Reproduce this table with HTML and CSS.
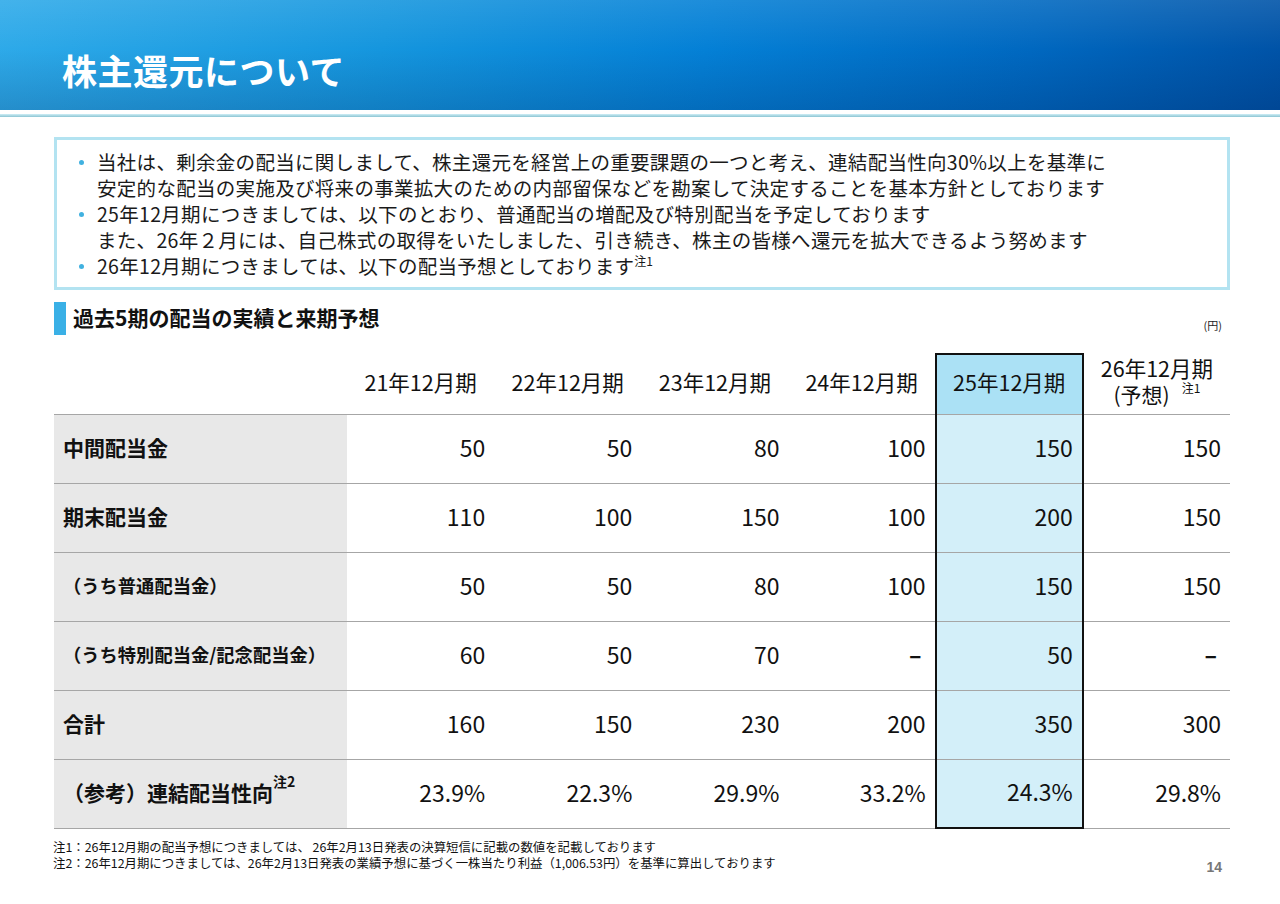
FILE: index.html
```html
<!DOCTYPE html>
<html lang="ja">
<head>
<meta charset="utf-8">
<title>株主還元について</title>
<link rel="stylesheet" href="styles.css">
</head>
<body>
<div class="slide">
  <header class="header">
    <h1 class="title">株主還元について</h1>
  </header>
  <div class="rule"></div>
  <main class="content">
    <section class="infobox">
      <ul class="bullets">
        <li>当社は、剰余金の配当に関しまして、株主還元を経営上の重要課題の一つと考え、連結配当性向30%以上を基準に<br>安定的な配当の実施及び将来の事業拡大のための内部留保などを勘案して決定することを基本方針としております</li>
        <li>25年12月期につきましては、以下のとおり、普通配当の増配及び特別配当を予定しております<br>また、26年２月には、自己株式の取得をいたしました、引き続き、株主の皆様へ還元を拡大できるよう努めます</li>
        <li>26年12月期につきましては、以下の配当予想としております<sup class="note">注1</sup></li>
      </ul>
    </section>
    <div class="section-head">
      <span class="bar"></span>
      <h2 class="section-title">過去5期の配当の実績と来期予想</h2>
      <span class="unit">(円)</span>
    </div>
    <table class="divtable">
      <colgroup>
        <col class="c-label"><col class="c-val"><col class="c-val"><col class="c-val"><col class="c-val"><col class="c-val"><col class="c-val">
      </colgroup>
      <thead>
        <tr>
          <th class="blank"></th>
          <th>21年12月期</th>
          <th>22年12月期</th>
          <th>23年12月期</th>
          <th>24年12月期</th>
          <th class="hl hl-head">25年12月期</th>
          <th class="two"><span class="l1">26年12月期</span><span class="l2"><span class="yosou">(予想)</span><sup class="hnote">注1</sup></span></th>
        </tr>
      </thead>
      <tbody>
        <tr>
          <td class="lab">中間配当金</td>
          <td>50</td><td>50</td><td>80</td><td>100</td><td class="hl">150</td><td>150</td>
        </tr>
        <tr>
          <td class="lab">期末配当金</td>
          <td>110</td><td>100</td><td>150</td><td>100</td><td class="hl">200</td><td>150</td>
        </tr>
        <tr>
          <td class="lab sub">（うち普通配当金）</td>
          <td>50</td><td>50</td><td>80</td><td>100</td><td class="hl">150</td><td>150</td>
        </tr>
        <tr>
          <td class="lab sub">（うち特別配当金/記念配当金）</td>
          <td>60</td><td>50</td><td>70</td><td class="dash">–</td><td class="hl">50</td><td class="dash">–</td>
        </tr>
        <tr>
          <td class="lab">合計</td>
          <td>160</td><td>150</td><td>230</td><td>200</td><td class="hl">350</td><td>300</td>
        </tr>
        <tr class="last">
          <td class="lab">（参考）連結配当性向<sup class="lnote">注2</sup></td>
          <td>23.9%</td><td>22.3%</td><td>29.9%</td><td>33.2%</td><td class="hl hl-last">24.3%</td><td>29.8%</td>
        </tr>
      </tbody>
    </table>
    <footer class="notes">
      <div class="note-lines">
        <p>注1：26年12月期の配当予想につきましては、 26年2月13日発表の決算短信に記載の数値を記載しております</p>
        <p>注2：26年12月期につきましては、26年2月13日発表の業績予想に基づく一株当たり利益（1,006.53円）を基準に算出しております</p>
      </div>
      <span class="page">14</span>
    </footer>
  </main>
</div>
</body>
</html>
```

FILE: styles.css
```css
* { box-sizing: border-box; }
html, body { margin: 0; padding: 0; }
body {
  width: 1280px;
  height: 904px;
  overflow: hidden;
  background: #ffffff;
  font-family: "Noto Sans CJK JP", "Noto Sans", sans-serif;
  color: #111111;
}
.slide { width: 1280px; height: 904px; }

.header {
  height: 110px;
  background:
    linear-gradient(to bottom, rgba(255,255,255,0.10) 0%, rgba(0,0,0,0) 45%, rgba(0,20,70,0.18) 100%),
    linear-gradient(100deg, #2eaae9 0%, #1596de 30%, #0480d6 55%, #0068c0 80%, #0052a6 100%);
  display: flex;
  align-items: flex-end;
  padding: 0 0 20px 62px;
}
.title {
  margin: 0;
  color: #ffffff;
  font-size: 35px;
  font-weight: 700;
  line-height: 40px;
  letter-spacing: 0.5px;
}
.rule {
  margin-top: 4px;
  height: 3px;
  background: linear-gradient(to bottom, #cfeef6, #8cc5d3);
}

.content { padding: 0 50px 0 54px; }

.infobox {
  margin-top: 20px;
  height: 153px;
  border: 3px solid #b3e3f1;
  padding: 9px 0 0 21px;
}
.bullets {
  list-style: none;
  margin: 0;
  padding: 0;
  font-size: 19.5px;
  letter-spacing: 0.3px;
  line-height: 26px;
  color: #1a1a1a;
}
.bullets li {
  position: relative;
  padding-left: 19px;
  white-space: nowrap;
}
.bullets li::before {
  content: "";
  position: absolute;
  left: 1px;
  top: 11px;
  width: 5px;
  height: 5px;
  border-radius: 50%;
  background: #41b1e0;
}
.note {
  font-size: 12px;
  vertical-align: top;
  line-height: 16px;
  letter-spacing: 0;
}

.section-head {
  margin-top: 12px;
  height: 51px;
  display: flex;
  align-items: flex-start;
}
.bar {
  width: 12px;
  height: 33px;
  background: #3ab0e6;
  flex: none;
}
.section-title {
  margin: 0 0 0 7px;
  font-size: 21px;
  font-weight: 700;
  line-height: 30px;
  color: #111;
}
.unit {
  margin-left: auto;
  margin-top: 16px;
  margin-right: 8px;
  font-size: 11px;
  line-height: 14px;
  color: #222;
}

.divtable {
  width: 1176px;
  border-collapse: collapse;
  table-layout: fixed;
}
.c-label { width: 293px; }
.c-val { width: 147.17px; }
.divtable th {
  height: 60px;
  font-size: 21.5px;
  font-weight: 400;
  text-align: center;
  line-height: 26px;
  padding: 0 0 4px 0;
  border-bottom: 1px solid #a6a6a6;
  color: #111;
  white-space: nowrap;
}
.divtable th.two { padding: 0 0 6px 0; }
.l1, .l2 { display: block; height: 26px; }
.yosou { font-size: 21px; }
.hnote {
  font-size: 12px;
  vertical-align: top;
  line-height: 14px;
  margin-left: 12px;
}
.divtable td {
  height: 69px;
  font-size: 23px;
  text-align: right;
  padding: 0 9px 4px 0;
  border-bottom: 1px solid #a6a6a6;
  color: #111;
}
.divtable td.lab {
  background: #e8e8e8;
  text-align: left;
  padding-left: 9px;
  font-size: 21px;
  font-weight: 700;
  white-space: nowrap;
}
.divtable td.lab.sub { font-size: 18.3px; }
.lnote {
  font-size: 14px;
  vertical-align: top;
  position: relative;
  top: -3px;
  line-height: 1;
}
.divtable td.dash { padding-right: 13px; font-weight: 700; }
.divtable .hl {
  background: #d3eff9;
  border-left: 2px solid #111;
  border-right: 2px solid #111;
}
.divtable th.hl-head {
  background: #abe1f5;
  border-top: 2px solid #111;
}
.divtable td.hl-last { border-bottom: 2px solid #111; }

.notes {
  display: flex;
  align-items: flex-start;
  margin-top: 10px;
  margin-left: -1px;
}
.note-lines p {
  margin: 0;
  font-size: 12.4px;
  line-height: 16px;
  color: #111;
  white-space: nowrap;
}
.page {
  margin-left: auto;
  margin-top: 20px;
  margin-right: 8px;
  font-family: "Liberation Sans", Arial, sans-serif;
  font-weight: 700;
  font-size: 14px;
  color: #777;
}
```
